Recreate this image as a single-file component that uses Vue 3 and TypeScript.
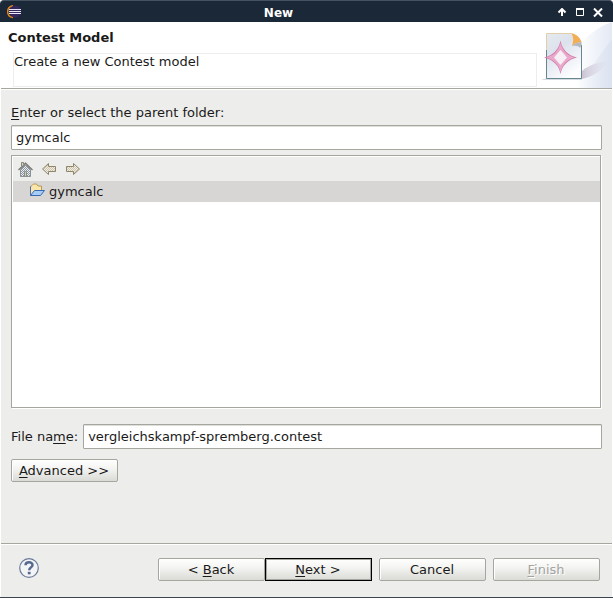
<script setup lang="ts">
import { ref } from 'vue'

const folder = ref<string>('gymcalc')
const fileName = ref<string>('vergleichskampf-spremberg.contest')
</script>

<template>
  <main class="window">
    <header class="titlebar">
      <svg class="app-icon" width="16" height="16" viewBox="0 0 16 16" aria-hidden="true">
        <path d="M7 0.800A6.500 6 0 0 0 7 12.600" fill="none" stroke="#e8861c" stroke-width="1.500" />
        <ellipse cx="9.300" cy="6.600" rx="5.800" ry="6.200" fill="#33275f" />
        <path d="M3 4.500h12M3 6.500h12M3 8.500h12" stroke="#e9e7f4" stroke-width="1" />
      </svg>
      <h1 class="title">New</h1>
      <div class="window-buttons">
        <button type="button" class="win-btn" aria-label="Roll up">
          <svg width="10" height="10" viewBox="0 0 10 10"><path d="M5 8V1.500M1.500 4.500L5 1L8.500 4.500" fill="none" stroke="#fff" stroke-width="2" /></svg>
        </button>
        <button type="button" class="win-btn" aria-label="Maximize">
          <svg width="10" height="10" viewBox="0 0 10 10"><path d="M1.500 0.500h7v7h-7z" fill="none" stroke="#fff" /><path d="M1 1h8" stroke="#fff" stroke-width="2" /></svg>
        </button>
        <button type="button" class="win-btn" aria-label="Close">
          <svg width="10" height="10" viewBox="0 0 10 10"><path d="M1 0.500l8 8M9 0.500L1 8.500" stroke="#fff" stroke-width="2" /></svg>
        </button>
      </div>
    </header>

    <section class="banner">
      <div class="banner-text">
        <h2 class="heading">Contest Model</h2>
        <p class="description">Create a new Contest model</p>
      </div>
      <svg class="banner-art" width="75" height="66" viewBox="0 0 75 66" aria-hidden="true">
        <defs>
          <linearGradient id="sky" x1="0" y1="0" x2="1" y2="0">
            <stop offset="0" stop-color="#fff" />
            <stop offset="1" stop-color="#e3e9f4" />
          </linearGradient>
          <linearGradient id="swell" x1="0" y1="0" x2="1" y2="0">
            <stop offset="0.100" stop-color="#d3dcec" stop-opacity="0" />
            <stop offset="1" stop-color="#d3dcec" stop-opacity="0.500" />
          </linearGradient>
          <linearGradient id="sheet" x1="0" y1="0" x2="0.600" y2="1">
            <stop offset="0" stop-color="#e6eaf0" />
            <stop offset="0.400" stop-color="#dce2ec" />
            <stop offset="1" stop-color="#fdfdff" />
          </linearGradient>
          <linearGradient id="cast" x1="0" y1="0" x2="1" y2="0">
            <stop offset="0" stop-color="#c9c3d3" />
            <stop offset="1" stop-color="#dcd8e6" stop-opacity="0" />
          </linearGradient>
        </defs>
        <path d="M75 0C62 4 50 14 40 25V66H75Z" fill="url(#sky)" />
        <path d="M75 18C66 26 62 40 34 66H75Z" fill="url(#swell)" />
        <path d="M45 57V49C53 42 63 40 72 39C65 49 55 55 45 57Z" fill="url(#cast)" />
        <path d="M4 58H45V56H10Z" fill="#d6dae2" />
        <path d="M9.500 11.500H34L44.500 21V56.500H9.500Z" fill="url(#sheet)" />
        <path d="M9.500 40V11.500H34" fill="none" stroke="#e1cfa8" />
        <path d="M9.500 28V56.500H44.500V23" fill="none" stroke="#66878f" />
        <path d="M34 11C39 12 43 15 44.500 20C42 20 38 21 35 24C36.500 19 37 15 34 11Z" fill="#f4ad52" />
        <path d="M35 24C38 21 42 20 44.500 20V23L43 26C42 24 39 23.500 35 24Z" fill="#b4b8c0" />
        <path d="M23.500 18.500Q26 32 40 35.500Q26 39 23.500 52Q21 39 7 35.500Q21 32 23.500 18.500Z" fill="#d57bad" />
        <path d="M23.500 24Q26.500 32.500 34.500 35.500Q26.500 38.500 23.500 47Q20.500 38.500 12.500 35.500Q20.500 32.500 23.500 24Z" fill="#e8a9ca" stroke="#e8a9ca" stroke-width="2" />
        <path d="M23.500 28L30 35.500L23.500 43L17 35.500Z" fill="#f8eef6" />
      </svg>
    </section>

    <form class="wizard" @submit.prevent>
      <div class="body">
        <label class="folder-label" for="folder"><u>E</u>nter or select the parent folder:</label>
        <input id="folder" v-model="folder" class="field" type="text" spellcheck="false" />

        <div class="browser">
          <div class="toolbar">
            <button type="button" class="tool" aria-label="Home" disabled>
              <svg width="16" height="16" viewBox="0 0 16 16">
                <defs>
                  <pattern id="dither-gray" width="2" height="2" patternUnits="userSpaceOnUse"><path d="M0 0h1v1H0zM1 1h1v1H1z" fill="#8996a3" /></pattern>
                  <pattern id="dither-gold" width="2" height="2" patternUnits="userSpaceOnUse"><path d="M0 0h1v1H0zM1 1h1v1H1z" fill="#cfc5a6" /></pattern>
                </defs>
                <path d="M3.500 8.500L8.500 3.500l5 5v7h-10z" fill="url(#dither-gray)" stroke="#8b9299" />
                <path d="M1.500 9L8.500 2l7 7" fill="none" stroke="#77756c" stroke-width="1.200" />
                <path d="M4.500 5.500V1.500h2v2" fill="#d8d4cb" stroke="#8a857a" />
                <path d="M7.500 10.500h2v5h-2z" fill="#c9c9bd" stroke="#8c8f86" />
              </svg>
            </button>
            <button type="button" class="tool" aria-label="Back" disabled>
              <svg width="16" height="16" viewBox="0 0 16 16">
                <path d="M1.500 8L7.500 2.500v3h7v5h-7v3z" fill="url(#dither-gold)" stroke="#8f8569" />
              </svg>
            </button>
            <button type="button" class="tool" aria-label="Forward" disabled>
              <svg width="16" height="16" viewBox="0 0 16 16">
                <path d="M14.500 8L8.500 2.500v3h-7v5h7v3z" fill="url(#dither-gold)" stroke="#8f8569" />
              </svg>
            </button>
          </div>
          <ul class="tree" role="tree">
            <li class="node" role="treeitem" aria-selected="true">
              <svg width="16" height="18" viewBox="0 0 16 18" aria-hidden="true">
                <path d="M1.500 11.500V3.500L3 2.500L4.500 1h3L9 3h3.500v5l-9 4z" fill="#f9e6a8" stroke="#b39a5c" />
                <path d="M1.500 12.500L5.500 7.500H15.500L11.500 12.500Z" fill="#a5ccf7" stroke="#3a67b4" />
                <path d="M1.500 3.500v9" stroke="#4b6fae" />
              </svg>
              <span>gymcalc</span>
            </li>
          </ul>
        </div>

        <div class="file-row">
          <label for="file-name">File na<u>m</u>e:</label>
          <input id="file-name" v-model="fileName" class="field" type="text" spellcheck="false" />
        </div>

        <button type="button" class="btn"><span><u>A</u>dvanced &gt;&gt;</span></button>
      </div>

      <footer class="footer">
        <button type="button" class="help" aria-label="Help">
          <svg width="20" height="20" viewBox="0 0 20 20">
            <circle cx="10" cy="10" r="9.300" fill="#f3f4f6" stroke="#6a7b9b" stroke-width="1.200" />
            <path d="M6.500 7.300C6.600 3.300 13.500 3.300 13.500 7C13.500 9.500 10.200 9.300 10.200 12.300" fill="none" stroke="#566a90" stroke-width="2.500" />
            <path d="M8.800 13.800h2.800v2.500H8.800z" fill="#566a90" />
          </svg>
        </button>
        <div class="pager">
          <button type="button" class="btn"><span>&lt; <u>B</u>ack</span></button>
          <button type="submit" class="btn default"><span><u>N</u>ext &gt;</span></button>
        </div>
        <button type="button" class="btn">Cancel</button>
        <button type="button" class="btn" disabled><span><u>F</u>inish</span></button>
      </footer>
    </form>
  </main>
</template>

<style>
body {
  background: #fff;
}
</style>

<style scoped>
.window {
  box-sizing: border-box;
  min-height: 100vh;
  display: flex;
  flex-direction: column;
  border-bottom: 1px solid #3c454f;
  font: 13px/16px "DejaVu Sans", sans-serif;
  color: #1a1a1a;
}

button,
input {
  font: inherit;
  color: inherit;
}

u {
  text-underline-offset: 2px;
  text-decoration-thickness: 1px;
  text-decoration-skip-ink: none;
}

.titlebar {
  box-sizing: border-box;
  height: 22px;
  display: grid;
  grid-template-columns: 1fr auto 1fr;
  align-items: start;
  padding: 4px 10px 0 6px;
  border-top: 1px solid #46525f;
  border-radius: 4px 4px 0 0;
  background: #1b2838;
  color: #fff;
}

.title {
  margin: 0;
  padding-right: 52px;
  font-size: 12px;
  line-height: 16px;
}

.window-buttons {
  display: flex;
  justify-content: flex-end;
  gap: 8px;
  padding-top: 3px;
}

.win-btn {
  display: flex;
  padding: 0;
  border: 0;
  background: none;
}

.banner {
  display: flex;
  justify-content: space-between;
  margin: 0 1px;
  border-bottom: 1px solid #a5a69e;
  background: #fff;
}

.banner-text {
  flex: 1;
  display: flex;
  flex-direction: column;
  gap: 7px;
  padding: 8px 0 0 7px;
}

.heading {
  margin: 0;
  font-size: 13px;
  line-height: 16px;
}

.description {
  flex: 1;
  margin: 0 0 1px 5px;
  border: 1px solid #ededed;
}

.wizard {
  flex: 1;
  display: flex;
  flex-direction: column;
  margin: 0 1px;
  border-top: 1px solid #fff;
  background: #ededeb;
}

.body {
  flex: 1;
  display: flex;
  flex-direction: column;
  padding: 15px 10px 61px;
}

.field {
  box-sizing: border-box;
  width: 100%;
  height: 25px;
  padding: 0 4px;
  border: 1px solid #a5a69e;
  border-radius: 1px;
  background: #fff;
  outline: 0;
  box-shadow: inset 0 1px #dededb;
}

.folder-label {
  margin-bottom: 4px;
}

.browser {
  flex: 1;
  margin: 5px 1px 16px 0;
  border: 1px solid #a5a69e;
  background: #fff;
  box-shadow: 1px 1px #fff;
}

.toolbar {
  display: flex;
  align-items: center;
  gap: 8px;
  height: 24px;
  margin: 1px 0 0 1px;
  padding-left: 4px;
  background: #ededeb;
}

.tool {
  display: flex;
  padding: 0;
  border: 0;
  background: none;
}

.tree {
  list-style: none;
  margin: 0 0 0 1px;
  padding: 0;
}

.node {
  display: flex;
  align-items: center;
  gap: 4px;
  height: 21px;
  padding-left: 16px;
  background: #d7d6d5;
}

.file-row {
  display: flex;
  align-items: center;
  gap: 5px;
  margin-bottom: 10px;
}

.file-row label {
  flex: none;
}

.file-row .field {
  flex: 1;
}

.btn {
  box-sizing: border-box;
  width: 107px;
  height: 23px;
  padding: 0 1px 0 0;
  border: 1px solid #a5a69e;
  border-radius: 2px;
  background: linear-gradient(#fff, #f4f4f2 40%, #dadbd6);
  box-shadow: inset 1px 1px #fff;
  white-space: nowrap;
}

.btn.default {
  border-color: #000;
  border-radius: 0;
  box-shadow: inset 0 0 0 1px #a5a69e;
}

.btn:disabled {
  color: #a3a49f;
  text-shadow: 1px 1px #fff;
}

.footer {
  display: flex;
  align-items: flex-start;
  gap: 7px;
  padding: 14px 12px 16px 18px;
  border-top: 1px solid #a5a69e;
  box-shadow: inset 0 1px #fff;
}

.help {
  display: flex;
  margin-right: auto;
  padding: 0;
  border: 0;
  background: none;
}

.pager {
  display: flex;
}
</style>
